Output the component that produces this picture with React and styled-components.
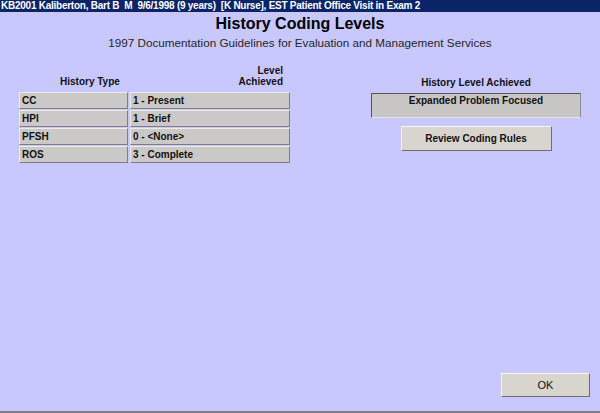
import styled, { createGlobalStyle } from 'styled-components';

const GlobalStyle = createGlobalStyle`
  html, body {
    margin: 0;
    padding: 0;
    background: #c8c8fe;
  }
  body {
    font-family: "Liberation Sans", Arial, sans-serif;
  }
`;

const Page = styled.div`
  height: 413px;
  display: flex;
  flex-direction: column;
  background: #c8c8fe;
  box-sizing: border-box;
  border-bottom: 2px solid #7c7c8a;
`;

const TitleBar = styled.div`
  height: 12px;
  line-height: 12px;
  background: #0b2468;
  color: #ffffff;
  font-size: 10px;
  font-weight: bold;
  padding-left: 1px;
  white-space: nowrap;
  letter-spacing: -0.25px;
`;

const Heading = styled.h1`
  margin: 2px 0 0;
  text-align: center;
  font-size: 16px;
  line-height: 19px;
  font-weight: bold;
  color: #000;
`;

const SubHeading = styled.div`
  margin-top: 3px;
  text-align: center;
  font-size: 11.7px;
  line-height: 14px;
  color: #262626;
`;

const Main = styled.div`
  display: flex;
  align-items: flex-start;
  padding: 10px 0 0 19px;
`;

const LeftPanel = styled.div`
  width: 271px;
  display: flex;
  flex-direction: column;
`;

const ColumnHeads = styled.div`
  display: flex;
  align-items: flex-end;
  height: 27px;
  margin-bottom: 5px;
`;

const ColumnHead = styled.div`
  font-size: 10px;
  font-weight: bold;
  line-height: 11px;
  color: #101018;
  text-align: ${p => p.$align || 'center'};
  width: ${p => p.$width}px;
  padding: ${p => p.$pad || '0'};
  box-sizing: border-box;
`;

const Row = styled.div`
  display: flex;
  gap: 2px;
  margin-bottom: 1px;
`;

const Cell = styled.div`
  width: ${p => p.$width}px;
  height: 17px;
  box-sizing: border-box;
  background: #cbc9c7;
  border-top: 1px solid #ebebeb;
  border-left: 1px solid #ebebeb;
  border-right: 1px solid #7e7e7e;
  border-bottom: 1px solid #7e7e7e;
  font-size: 10px;
  font-weight: bold;
  line-height: 15px;
  padding-left: 2px;
  color: #111;
  white-space: nowrap;
`;

const RightPanel = styled.div`
  margin-left: 81px;
  width: 210px;
  display: flex;
  flex-direction: column;
  align-items: center;
`;

const LevelLabel = styled.div`
  margin-top: 17px;
  font-size: 10px;
  font-weight: bold;
  line-height: 11px;
  color: #101018;
`;

const LevelBox = styled.div`
  margin-top: 5px;
  width: 210px;
  height: 25px;
  box-sizing: border-box;
  background: #c8c6c4;
  border-top: 1px solid #555;
  border-left: 1px solid #555;
  border-right: 1px solid #8a8a8a;
  border-bottom: 1px solid #e8e8e8;
  font-size: 10px;
  font-weight: bold;
  text-align: center;
  line-height: 12px;
  padding-top: 1px;
  color: #111;
`;

const Button = styled.button`
  width: ${p => p.$width}px;
  height: ${p => p.$height}px;
  background: #d8d5ce;
  border-top: 1px solid #f6f6f6;
  border-left: 1px solid #f6f6f6;
  border-right: 1px solid #6e6e6e;
  border-bottom: 1px solid #6e6e6e;
  box-sizing: border-box;
  font-family: "Liberation Sans", Arial, sans-serif;
  font-size: ${p => p.$size || 10}px;
  font-weight: ${p => (p.$bold ? 'bold' : 'normal')};
  color: #111;
  padding: 0;
  cursor: pointer;
`;

const ReviewButton = styled(Button)`
  margin-top: 8px;
`;

const Footer = styled.div`
  margin-top: auto;
  display: flex;
  justify-content: flex-end;
  padding: 0 10px 14px 0;
`;

const rows = [
  ['CC', '1 - Present'],
  ['HPI', '1 - Brief'],
  ['PFSH', '0 - <None>'],
  ['ROS', '3 - Complete'],
];

export default function App() {
  return (
    <>
      <GlobalStyle />
      <Page>
        <TitleBar>
          KB2001 Kaliberton, Bart B&nbsp; M&nbsp; 9/6/1998 (9 years)&nbsp; [K Nurse], EST Patient Office Visit in Exam 2
        </TitleBar>
        <Heading>History Coding Levels</Heading>
        <SubHeading>1997 Documentation Guidelines for Evaluation and Management Services</SubHeading>
        <Main>
          <LeftPanel>
            <ColumnHeads>
              <ColumnHead $width={111} $pad="0 0 0 41px" $align="left">History Type</ColumnHead>
              <ColumnHead $width={160} $pad="0 7px 0 0" $align="right">Level<br />Achieved</ColumnHead>
            </ColumnHeads>
            {rows.map(([type, level]) => (
              <Row key={type}>
                <Cell $width={109}>{type}</Cell>
                <Cell $width={160}>{level}</Cell>
              </Row>
            ))}
          </LeftPanel>
          <RightPanel>
            <LevelLabel>History Level Achieved</LevelLabel>
            <LevelBox>Expanded Problem Focused</LevelBox>
            <ReviewButton $width={151} $height={25} $bold>Review Coding Rules</ReviewButton>
          </RightPanel>
        </Main>
        <Footer>
          <Button $width={89} $height={24} $size={11}>OK</Button>
        </Footer>
      </Page>
    </>
  );
}
